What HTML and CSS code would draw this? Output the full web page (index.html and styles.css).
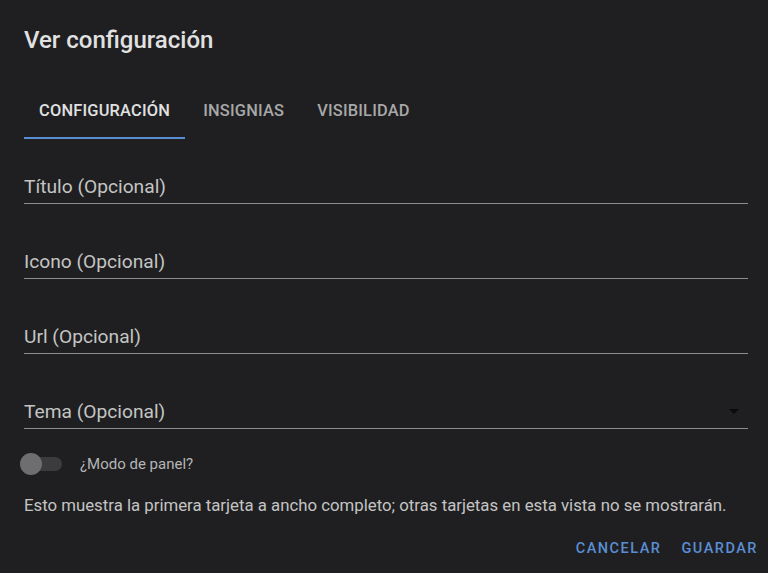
FILE: index.html
```html
<!DOCTYPE html>
<html lang="es">
  <head>
    <meta charset="UTF-8" />
    <title>Ver configuración</title>
    <link rel="stylesheet" href="styles.css">
  </head>
  <body>
    <div class="dialog">
      <h2 class="dialog-title">Ver configuración</h2>

      <div class="tabs">
        <div class="tab active">Configuración</div>
        <div class="tab">Insignias</div>
        <div class="tab">Visibilidad</div>
      </div>

      <div class="fields">
        <div class="field"><span class="field-label">Título (Opcional)</span></div>
        <div class="field"><span class="field-label">Icono (Opcional)</span></div>
        <div class="field"><span class="field-label">Url (Opcional)</span></div>
        <div class="field select">
          <span class="field-label">Tema (Opcional)</span>
          <span class="arrow"></span>
        </div>
      </div>

      <div class="switch-row">
        <div class="switch">
          <div class="track"></div>
          <div class="thumb"></div>
        </div>
        <span class="switch-label">¿Modo de panel?</span>
      </div>

      <p class="note">Esto muestra la primera tarjeta a ancho completo; otras tarjetas en esta vista no se mostrarán.</p>

      <div class="actions">
        <button>Cancelar</button>
        <button>Guardar</button>
      </div>
    </div>
  </body>
</html>
```

FILE: styles.css
```css
body {
    margin: 0;
    background-color: #1f1f21;
    font-family: Roboto, "Noto Sans", sans-serif;
    color: #e1e1e1;
}

.dialog {
    width: 768px;
    height: 573px;
    box-sizing: border-box;
    padding: 0 20px 0 24px;
    display: flex;
    flex-direction: column;
}

.dialog-title {
    margin: 0;
    padding-top: 26px;
    font-size: 24px;
    font-weight: 500;
    line-height: 28px;
    color: #e1e1e1;
}

.tabs {
    display: flex;
    gap: 3px;
    margin-top: 31px;
}

.tab {
    padding: 0 15px;
    height: 54px;
    line-height: 52px;
    font-size: 16.4px;
    font-weight: 500;
    text-transform: uppercase;
    letter-spacing: 0.2px;
    color: #a8a8a8;
    box-sizing: border-box;
}

.tab.active {
    color: #e1e1e1;
    border-bottom: 2px solid #5a8ed4;
}

.fields {
    display: flex;
    flex-direction: column;
    margin-top: 15px;
}

.field {
    height: 50px;
    margin-top: 25px;
    border-bottom: 1px solid #8c8c8c;
    display: flex;
    align-items: flex-end;
    justify-content: space-between;
    box-sizing: border-box;
}

.field:first-child {
    margin-top: 0;
}

.field-label {
    font-size: 19.2px;
    line-height: 22px;
    padding-bottom: 5px;
    color: #c4c4c4;
}

.arrow {
    width: 0;
    height: 0;
    border-left: 5px solid transparent;
    border-right: 5px solid transparent;
    border-top: 5px solid #0a0a0a;
    margin: 0 9px 14px 0;
}

.switch-row {
    display: flex;
    align-items: center;
    margin-top: 24px;
    margin-left: -4px;
}

.switch {
    position: relative;
    width: 44px;
    height: 22px;
}

.track {
    position: absolute;
    left: 6px;
    top: 4px;
    width: 36px;
    height: 14px;
    border-radius: 7px;
    background-color: #3c3c3e;
}

.thumb {
    position: absolute;
    left: 0;
    top: 0;
    width: 22px;
    height: 22px;
    border-radius: 50%;
    background-color: #6e6e70;
}

.switch-label {
    margin-left: 16px;
    font-size: 15px;
    color: #b5b5b5;
}

.note {
    margin: 19px 0 0;
    font-size: 16.8px;
    line-height: 22px;
    color: #c4c4c4;
}

.actions {
    display: flex;
    justify-content: flex-end;
    margin-top: 14px;
    margin-right: -18px;
}

.actions button {
    background: none;
    border: none;
    padding: 0 8px;
    margin-left: 4px;
    height: 36px;
    font-family: Roboto, "Noto Sans", sans-serif;
    font-size: 14.5px;
    font-weight: 500;
    text-transform: uppercase;
    letter-spacing: 1.5px;
    color: #5a8ed4;
}
```
